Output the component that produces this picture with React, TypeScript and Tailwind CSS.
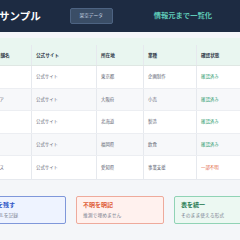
const rows = [
  { name: "東京企画", site: "公式サイト", pref: "東京都", type: "企画制作", status: "確認済み", ok: true },
  { name: "北浜ストア", site: "公式サイト", pref: "大阪府", type: "小売", status: "確認済み", ok: true },
  { name: "札幌製作", site: "公式サイト", pref: "北海道", type: "製造", status: "確認済み", ok: true },
  { name: "福岡食堂", site: "公式サイト", pref: "福岡県", type: "飲食", status: "確認済み", ok: true },
  { name: "光サービス", site: "公式サイト", pref: "愛知県", type: "事業支援", status: "一部不明", ok: false },
];

const cols = "grid grid-cols-[54px_65px_47px_53px_1fr]";
const cell = "pl-[4px] flex items-center border-r border-[#e6e9ee] last:border-r-0";

export default function App() {
  return (
    <div
      className="w-[240px] h-[240px] overflow-hidden bg-[#f4f6f9]"
      style={{ fontFamily: '"Noto Sans CJK JP", "Noto Sans", sans-serif' }}
    >
      <div className="-ml-[22px] w-[284px]">
        {/* top bar */}
        <header className="h-[32px] bg-[#1d2b42] flex items-center">
          <h1 className="text-[10.5px] font-bold text-white leading-none whitespace-nowrap">企業サンプル</h1>
          <span className="ml-[29px] h-[16px] w-[43px] rounded-[2px] bg-[#3a4d66] border border-[#4d6382] text-[4.7px] text-[#c9d4e2] flex items-center justify-center">
            架空データ
          </span>
          <span className="ml-[41px] text-[7.3px] font-bold text-[#5fc9b7] leading-none whitespace-nowrap">
            情報元まで一覧化
          </span>
        </header>

        {/* table */}
        <div className="mt-[6px] bg-white border-b border-[#e6e9ee]">
          <div className={`${cols} h-[28px] pt-[7px] bg-[#e9f6f0] text-[4.6px] font-bold text-[#2f3a48] border-b border-[#dfe7e3]`}>
            <div className={`${cell} whitespace-nowrap`}>会社・店舗名</div>
            <div className={cell}>公式サイト</div>
            <div className={cell}>所在地</div>
            <div className={cell}>業種</div>
            <div className={cell}>確認状態</div>
          </div>
          {rows.map((r, i) => (
            <div
              key={i}
              className={`${cols} h-[22.5px] text-[4.4px] text-[#5b6270] border-b border-[#eceef2] last:border-b-0 ${
                i % 2 === 1 ? "bg-[#f7f8fa]" : "bg-white"
              }`}
            >
              <div className={`${cell} whitespace-nowrap`}>{r.name}</div>
              <div className={cell}>{r.site}</div>
              <div className={cell}>{r.pref}</div>
              <div className={cell}>{r.type}</div>
              <div className={`${cell} ${r.ok ? "text-[#2b9a6d]" : "text-[#e2643f]"}`}>{r.status}</div>
            </div>
          ))}
        </div>

        {/* cards */}
        <div className="mt-[16px] grid grid-cols-3 gap-[10px]">
          <div className="h-[28px] rounded-[2px] border border-[#7f97da] bg-[#eef3ff] pl-[6px] pt-[4px]">
            <div className="text-[6px] font-bold text-[#2f56c6] leading-[8px] whitespace-nowrap">出典を残す</div>
            <div className="mt-[3px] text-[4.8px] text-[#7a8190] leading-[6px] whitespace-nowrap">出典URLを記録</div>
          </div>
          <div className="h-[28px] rounded-[2px] border border-[#eeaa9c] bg-[#fff1ee] pl-[6px] pt-[4px]">
            <div className="text-[6px] font-bold text-[#e0603a] leading-[8px]">不明を明記</div>
            <div className="mt-[3px] text-[4.8px] text-[#7a8190] leading-[6px]">推測で埋めません</div>
          </div>
          <div className="h-[28px] rounded-[2px] border border-[#90d3b5] bg-[#ecf8f2] pl-[6px] pt-[4px]">
            <div className="text-[6px] font-bold text-[#1e7a50] leading-[8px]">表を統一</div>
            <div className="mt-[3px] text-[4.8px] text-[#7a8190] leading-[6px]">そのまま使える形式</div>
          </div>
        </div>
      </div>
    </div>
  );
}
